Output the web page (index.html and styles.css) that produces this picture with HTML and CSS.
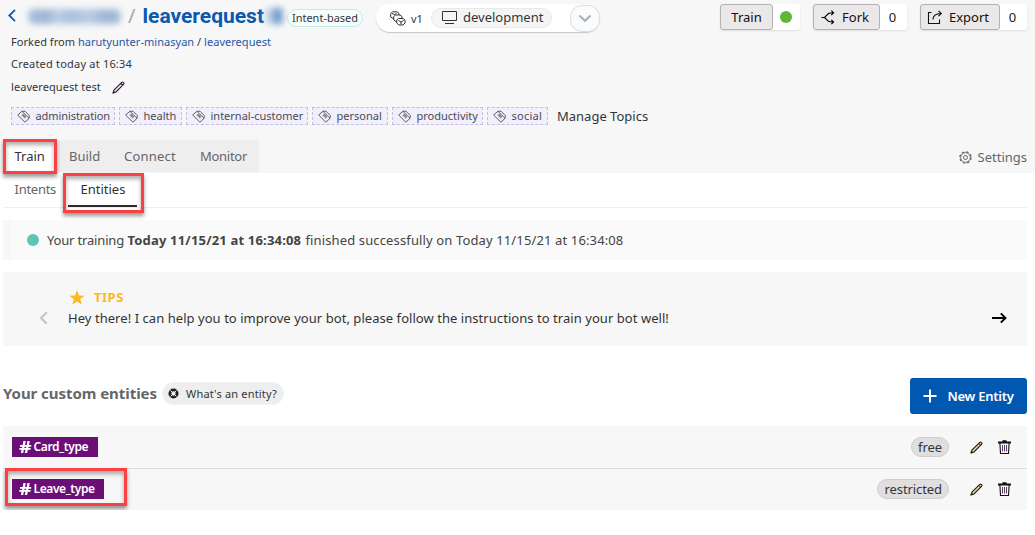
FILE: index.html
```
<!DOCTYPE html>
<html lang="en">
<head>
<meta charset="utf-8">
<title>leaverequest - Entities</title>
<link rel="stylesheet" href="styles.css">
</head>
<body>
<svg class="defs" width="0" height="0">
  <symbol id="pencil" viewBox="0 0 13 13"><path d="M1.300 11.700 2 9 9.800 1.300Q10.400.700 11.100 1.300L11.700 1.900Q12.300 2.600 11.700 3.200L4 11ZM8.700 2.400l1.900 1.900" fill="none" stroke="currentColor" stroke-width="1.100"/><path d="M.4 12.600 1.300 9.400 3.600 11.700Z" fill="currentColor"/></symbol>
  <symbol id="pencil-warm" viewBox="0 0 13 13"><path d="M1.300 11.700 2 9 9.800 1.300Q10.400.700 11.100 1.300L11.700 1.900Q12.300 2.600 11.700 3.200L4 11Z" fill="#f3d9a8" stroke="currentColor" stroke-width="1.100"/><path d="M8.700 2.400l1.900 1.900" stroke="currentColor"/><path d="M.4 12.600 1.300 9.400 3.600 11.700Z" fill="currentColor"/></symbol>
  <symbol id="tag" viewBox="0 0 13 13"><path d="M.7 5 4.900 1.300 12.100 8.300 7.900 12.200ZM4.900 1.300 8 1.200 12.300 5.500 12.100 8.300" fill="none" stroke="currentColor" stroke-width=".95"/><path d="M4.200 5 6.500 3.800 9.200 6.500 8 8.700Z" fill="currentColor" opacity=".65"/></symbol>
  <symbol id="trash" viewBox="0 0 13 15"><path d="M0 2.500h13M4.500 1.200h4" stroke="currentColor" stroke-width="2" fill="none"/><path d="M1.900 3 2.500 13.500h8L11.100 3" fill="none" stroke="currentColor" stroke-width="1.100"/><path d="M4.500 5v6.500M6.500 5v6.500M8.500 5v6.500" stroke="#5b3f68" stroke-width="1"/></symbol>
</svg>
<header class="header">
  <div class="top">
    <svg class="back" width="8" height="13" viewBox="0 0 8 13"><path d="M7 .8 1.300 6.500 7 12.200" fill="none" stroke="currentColor" stroke-width="1.800"/></svg>
    <span class="owner"></span>
    <span class="slash">/</span>
    <span class="title">leaverequest</span>
    <span class="suffix"></span>
    <span class="kind">Intent-based</span>
    <div class="version">
      <svg class="stack" width="16" height="15" viewBox="0 0 16 15"><g fill="#fff" stroke="#333" stroke-width="1"><path d="M.7 2.500 2.500.8H7L9 2.500V6L7.500 7.500H3L.7 6Z"/><path d="M3.700 5.500 5.500 4h4.500L12 5.500V9l-1.500 1.500H6L3.700 9Z"/><path d="M6.700 9 8.500 7.500H13L15 9v3l-2 2H9l-2.300-2Z"/><path d="M2 2.500 4.500 3.500 6.500 2.500M8.500 9.500 11 11l2.500-1.500M11 11v2.500" fill="none"/></g></svg>
      <span class="vnum">v1</span>
      <span class="env"><svg width="15" height="13" viewBox="0 0 15 13"><path d="M.5 .5H14.500V9.500H.5ZM3 12.500h9" fill="none" stroke="#333" stroke-width="1"/></svg>development</span>
      <span class="drop"><svg width="14" height="9" viewBox="0 0 14 9"><path d="M1.500 1.500 7 6.800l5.500-5.300" fill="none" stroke="#b0b1b3" stroke-width="2.200"/></svg></span>
    </div>
    <div class="actions">
      <div class="action train"><button>Train</button><span class="count"><i class="green"></i></span></div>
      <div class="action fork"><button><svg width="14" height="15" viewBox="0 0 14 15"><path d="M.5 7.500H3.500L7.500 3.500Q8.500 2.800 12.500 2.800M3.500 7.500 7.500 11.300Q8.500 12 12.500 12M10.300 .6 12.600 2.800 10.300 5M10.300 9.800l2.300 2.200L10.300 14.200" fill="none" stroke="#000" stroke-width="1.100"/></svg>Fork</button><span class="count">0</span></div>
      <div class="action export"><button><svg width="16" height="15" viewBox="0 0 16 15"><path d="M4.500 2.500H1.500V13.500H12.500V9.500M6 9.500C6 6 8 3.800 14 3.500M11.500.800 14.300 3.500 11.500 6.200" fill="none" stroke="#111" stroke-width="1.100"/></svg>Export</button><span class="count">0</span></div>
    </div>
  </div>
  <div class="meta forked">Forked from <a>harutyunter-minasyan</a> / <a>leaverequest</a></div>
  <div class="meta created">Created today at 16:34</div>
  <div class="meta desc">leaverequest test <svg width="13" height="13"><use href="#pencil"/></svg></div>
  <div class="topics">
    <span class="topic w1"><svg width="13" height="13"><use href="#tag"/></svg>administration</span>
    <span class="topic w2"><svg width="13" height="13"><use href="#tag"/></svg>health</span>
    <span class="topic w3"><svg width="13" height="13"><use href="#tag"/></svg>internal-customer</span>
    <span class="topic w4"><svg width="13" height="13"><use href="#tag"/></svg>personal</span>
    <span class="topic w5"><svg width="13" height="13"><use href="#tag"/></svg>productivity</span>
    <span class="topic w6"><svg width="13" height="13"><use href="#tag"/></svg>social</span>
    <span class="manage">Manage Topics</span>
  </div>
  <div class="navrow">
    <nav class="tabs"><span class="tab active">Train<i class="mark"></i></span><span class="tab build">Build</span><span class="tab connect">Connect</span><span class="tab monitor">Monitor</span></nav>
    <span class="settings"><svg width="13" height="13" viewBox="0 0 13 13" fill="none" stroke="#666"><circle cx="6.500" cy="6.500" r="5.600" stroke-width="1.300" stroke-dasharray="2.500 1.898"/><circle cx="6.500" cy="6.500" r="4.800" stroke-width=".9"/><circle cx="6.500" cy="6.500" r="2" stroke-width="1"/></svg>Settings</span>
  </div>
</header>
<main class="main">
  <nav class="subtabs"><span class="sub">Intents</span><span class="sub current">Entities<i class="mark"></i></span></nav>
  <div class="status"><i class="dot"></i><span class="s1">Your training</span><b>Today 11/15/21 at 16:34:08</b><span class="s2">finished successfully on Today 11/15/21 at 16:34:08</span></div>
  <section class="tips">
    <svg class="prev" width="9" height="14" viewBox="0 0 9 14"><path d="M7.800 1.200 2 7l5.800 5.800" fill="none" stroke="#b9c4d6" stroke-width="2"/></svg>
    <div class="tipbody">
      <div class="tiphead"><svg width="16" height="15" viewBox="0 0 16 15"><path d="M8 .3 10 5.500 15.600 5.700 11.200 9.100 12.700 14.500 8 11.400 3.300 14.500 4.800 9.100.4 5.700 6 5.500Z" fill="#fdb81e"/></svg>TIPS</div>
      <div class="tiptext">Hey there! I can help you to improve your bot, please follow the instructions to train your bot well!</div>
    </div>
    <svg class="next" width="16" height="12" viewBox="0 0 16 12"><path d="M1 6H14.500M9.800 1.300 14.500 6 9.800 10.700" fill="none" stroke="#000" stroke-width="1.900"/></svg>
  </section>
  <div class="heading">
    <h2>Your custom entities</h2>
    <span class="what"><svg width="11" height="11" viewBox="0 0 11 11"><circle cx="5.500" cy="5.500" r="3.600" fill="none" stroke="#222" stroke-width="2.900"/><path d="M2.500 2.500 4 4M7 7l1.500 1.500M8.500 2.500 7 4M4 7 2.500 8.500" stroke="#eee" stroke-width="1"/></svg>What's an entity?</span>
    <button class="new"><svg width="14" height="14" viewBox="0 0 14 14"><path d="M7 .5V13.500M.5 7H13.500" stroke="#fff" stroke-width="2"/></svg>New Entity</button>
  </div>
  <div class="list">
    <div class="row"><span class="entity card"><b>#</b>Card_type</span><span class="mode">free</span><svg class="edit" width="13" height="13"><use href="#pencil-warm"/></svg><svg class="del" width="13" height="15"><use href="#trash"/></svg></div>
    <div class="row"><span class="entity leave"><b>#</b>Leave_type</span><span class="mode">restricted</span><svg class="edit" width="13" height="13"><use href="#pencil-warm"/></svg><svg class="del" width="13" height="15"><use href="#trash"/></svg><i class="mark"></i></div>
  </div>
</main>
</body>
</html>
```

FILE: styles.css
```
* { box-sizing: border-box; }
body { margin: 0; background: #fff; font: 13px/18px "Noto Sans", sans-serif; color: #32363a; }
svg { display: block; flex: none; }
.defs { position: absolute; }
button { font: inherit; margin: 0; }
span, button, h2, a { white-space: nowrap; }

.header { height: 173px; padding: 3px 8px 0 3px; background: #f7f7f7; }
.top { display: flex; height: 29px; align-items: flex-start; }
.back { margin: 6px 0 0 5px; color: #0a5cb4; }
.owner { width: 93px; height: 15px; margin: 6px 0 0 12px; border-radius: 6px; filter: blur(3px); background: linear-gradient(90deg, #8fabd2, #7e9fcd 20%, #a9c0de 32%, #8fadd4 45%, #a5bddc 65%, #7e9fcd 85%, #8fabd2); opacity: .75; }
.slash { margin: 0 0 0 7px; font-size: 20px; line-height: 25px; color: #a5a7a9; width: 15px; }
.title { font: 700 21px/27px Roboto, sans-serif; color: #0a59b0; width: 122px; margin-left: -.5px; }
.suffix { width: 18px; height: 16px; margin: 5px 0 0 .5px; filter: blur(3px); background: linear-gradient(90deg, #c4d5ea, #a9c2e0 35%, #4a80c0 60%, #6494cb); opacity: .8; }
.kind { width: 76px; height: 18px; margin: 6px 0 0 4px; border: 1px solid #c8eae7; border-radius: 9px; background: #f6fdfd; font-size: 11px; line-height: 16px; text-align: center; }
.version { display: flex; align-items: center; width: 224px; height: 28px; margin: 1px 0 0 13px; padding-left: 14px; border-radius: 14px; background: #fff; box-shadow: 0 1px 1px #c5c6c8; }
.vnum { width: 20px; margin: 2px 0 0 5px; font-size: 11px; }
.env { display: flex; align-items: center; gap: 6px; height: 20px; width: 121px; padding: 0 0 1px 10px; margin-bottom: 1px; border: 1px solid #e9e9ea; border-radius: 10px; background: #f5f5f6; }
.drop { display: grid; place-items: center; width: 30px; height: 27px; margin-left: auto; border: 1px solid #d9dbe0; border-radius: 12px; background: #fafbfc; }
.actions { display: flex; margin: 1px 0 0 auto; gap: 13px; }
.action { display: flex; height: 26px; border-radius: 3px; background: #fff; box-shadow: 0 1px 2px #dedede; }
.action button { display: flex; align-items: center; justify-content: center; gap: 7px; height: 26px; padding: 0; border: 1px solid #b2b2b2; border-radius: 3px; background: #eae8e9; color: #111; }
.count { display: grid; place-items: center; flex: 1; padding-right: 2px; color: #222; }
.train { width: 80px; }
.train button { width: 53px; }
.fork { width: 94px; }
.fork button { width: 67px; padding-right: 3px; }
.export { width: 107px; }
.export button { width: 80px; padding-right: 4px; gap: 6px; }
.green { width: 12px; height: 12px; border-radius: 50%; background: #5bb936; }

.meta { height: 18px; margin: 1px 0 0 8px; font-size: 11px; }
.meta a { color: #1f56a5; }
.forked { letter-spacing: .03px; }
.created { margin-top: 4px; letter-spacing: .2px; }
.desc { display: flex; align-items: center; gap: 11px; margin-top: 5px; letter-spacing: .06px; }
.desc svg { color: #2a1233; }
.topics { display: flex; align-items: center; gap: 4px; height: 18px; margin: 11px 0 0 8px; }
.topic { display: flex; align-items: center; gap: 5.500px; height: 18px; padding-left: 5px; border: 1px dashed #c3bde9; background: #f1effb; font-size: 11px; color: #4b4b52; }
.topic svg { color: #555; }
.w1 { width: 104px; letter-spacing: -.08px; }
.w2 { width: 63px; }
.w3 { width: 122px; }
.w4 { width: 76px; }
.w5 { width: 91px; }
.w6 { width: 61px; letter-spacing: .25px; }
.manage { margin-left: 5px; }
.navrow { display: flex; justify-content: space-between; height: 33px; margin-top: 15px; }
.tabs { display: flex; height: 32px; width: 256px; background: #eee; line-height: 32px; color: #666; }
.tab { padding-left: 15px; }
.active { position: relative; width: 54px; padding-left: 11.500px; background: #fff; color: #333; }
.build { padding-left: 12px; width: 52px; }
.connect { width: 76px; letter-spacing: .2px; }
.monitor { padding-left: 15px; letter-spacing: -.28px; }
.settings { display: flex; align-items: center; gap: 6px; height: 34px; color: #666; }

.mark { position: absolute; border: 3px solid #fb4141; box-shadow: 0 3px 4px rgba(0,0,0,.4), inset 0 3px 4px rgba(0,0,0,.32); }
.active .mark { left: 0; top: -1px; width: 54px; height: 35px; }
.current .mark { left: -5px; top: 0; width: 81px; height: 40px; }
.row .mark { left: 2px; top: -1px; width: 122px; height: 38px; }

.main { padding: 0 8px 0 3px; }
.subtabs { display: flex; height: 35px; border-bottom: 1px solid #f0f0f0; line-height: 33px; color: #666; }
.sub { width: 65px; padding-left: 11.500px; letter-spacing: -.27px; }
.current { position: relative; width: 69px; height: 34px; padding-left: 12.500px; border-bottom: 2px solid #2b2b2b; color: #333; letter-spacing: 0; }
.status { display: flex; align-items: center; height: 40px; margin-top: 12px; padding-left: 16px; border-left: 8px solid #f7f7f7; background: #fafafa; color: #444; }
.dot { width: 12px; height: 12px; margin-right: 8px; border-radius: 50%; background: #5dc5b3; }
.s1 { width: 80.500px; letter-spacing: -.17px; }
.status b { width: 178px; letter-spacing: .18px; }
.s2 { letter-spacing: .13px; }
.tips { display: flex; align-items: center; height: 74px; margin-top: 12px; padding: 0 20px 0 36px; background: #f7f7f7; }
.prev { margin-top: 17px; }
.tipbody { flex: 1; height: 51px; margin-left: 20px; padding-top: 3px; }
.tiphead { display: flex; align-items: center; gap: 9px; height: 21px; padding-left: 1px; font-weight: 700; color: #fdb81e; letter-spacing: .5px; }
.tiptext { letter-spacing: .05px; line-height: 20px; color: #333; }
.next { margin-top: 17px; }
.heading { display: flex; height: 37px; margin-top: 31px; }
h2 { width: 159px; margin: 6px 0 0; font-size: 15px; line-height: 20px; color: #666; letter-spacing: -.05px; }
.what { display: flex; align-items: center; gap: 7px; width: 122px; height: 23px; margin-top: 5px; padding-left: 5px; border: 1px solid #f3f3f3; border-radius: 12px; background: #eee; font-size: 11px; letter-spacing: .18px; }
.new { display: flex; align-items: center; gap: 11px; width: 117px; height: 36px; margin: 1px 0 0 auto; padding: 0 0 0 12.500px; border: 0; border-radius: 3px; background: #0058b1; color: #fff; font-weight: 600; letter-spacing: -.27px; }
.list { margin-top: 12px; }
.row { position: relative; display: flex; align-items: flex-start; height: 41px; padding: 10px 16px 0 9px; background: #f7f7f7; }
.row:first-child { height: 43px; padding-top: 11px; border-bottom: 1px solid #dcdcdc; }
.entity { display: flex; align-items: center; height: 20px; padding-left: 7px; background: #6b0f77; color: #fff; font-size: 12px; font-weight: 600; letter-spacing: -.4px; }
.entity b { width: 14.500px; font-size: 16px; font-weight: 800; letter-spacing: 0; transform: scaleX(1.2); transform-origin: left; }
.card { width: 86px; }
.leave { width: 92px; }
.mode { height: 20px; margin-left: auto; padding: 0 6px; border: 1px solid #d0cece; border-radius: 10px; background: #e0dedf; line-height: 18px; letter-spacing: -.08px; }
.edit { margin: 4px 15px 0 21px; color: #1e1a12; }
.del { margin-top: 3px; color: #111; }
```
